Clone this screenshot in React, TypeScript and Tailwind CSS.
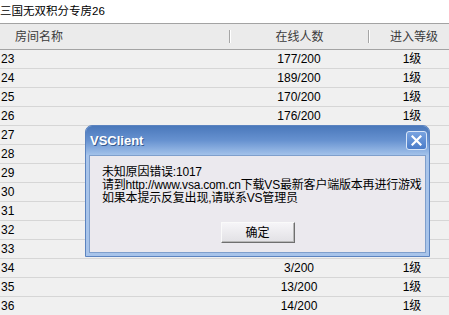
import React from 'react'

// rows 27-33 are covered by the dialog, only the room number shows
const rows = [
  ['23', '177/200', '1级'],
  ['24', '189/200', '1级'],
  ['25', '170/200', '1级'],
  ['26', '176/200', '1级'],
  ['27', '', ''],
  ['28', '', ''],
  ['29', '', ''],
  ['30', '', ''],
  ['31', '', ''],
  ['32', '', ''],
  ['33', '', ''],
  ['34', '3/200', '1级'],
  ['35', '13/200', '1级'],
  ['36', '14/200', '1级'],
]

function HeaderSep() {
  return <div className="h-[13px] w-[2px] border-l border-[#a6a6a6] border-r border-r-white" />
}

function ErrorDialog() {
  return (
    <div className="absolute left-[85px] top-[125px] flex h-[132px] w-[345px] flex-col overflow-hidden rounded-t-[7px] border border-[#5b83bf] bg-[#a8c4ea]">
      <div className="flex h-[29px] shrink-0 items-center justify-between bg-linear-to-b from-[#4a78bb] via-[#6792d0] to-[#a3c2ea] pl-[4px] pr-[2px]">
        <span className="text-[13px] font-bold text-white [text-shadow:1px_1px_0_#34598f]">VSClient</span>
        <div className="flex h-[19px] w-[21px] items-center justify-center rounded-[3px] border border-[#d9e6f8] bg-linear-to-b from-[#79a3e0] to-[#4a7cc9]">
          <svg width="11" height="11" viewBox="0 0 11 11">
            <path d="M1.5 1.5 L9.5 9.5 M9.5 1.5 L1.5 9.5" stroke="white" strokeWidth="2.2" strokeLinecap="square" />
          </svg>
        </div>
      </div>
      <div className="mx-[3px] mb-[3px] flex flex-1 flex-col border border-[#7f9fcc] bg-[#ebe9ee] pl-[12px] pt-[10px]">
        <div className="text-[12px] leading-[13px] tracking-[-0.2px] text-black">
          <div>未知原因错误:1017</div>
          <div className="whitespace-nowrap">请到http://www.vsa.com.cn下载VS最新客户端版本再进行游戏</div>
          <div>如果本提示反复出现,请联系VS管理员</div>
        </div>
        <div className="mt-[17px] flex justify-center pr-[12px]">
          <div className="flex h-[21px] w-[74px] items-center justify-center border border-[#fafafa] border-b-[#6f6f6f] border-r-[#6f6f6f] bg-linear-to-b from-[#f6f5f8] to-[#e2e1e5] text-[12px] text-black shadow-[inset_-1px_-1px_0_#b8b8b8]">
            确定
          </div>
        </div>
      </div>
    </div>
  )
}

export default function App() {
  return (
    <div className="relative h-[315px] w-[449px] overflow-hidden bg-white font-['Liberation_Sans','Noto_Sans_CJK_SC',sans-serif] text-black">
      <div className="h-[23px] whitespace-nowrap text-[11.5px] leading-[22px]">三国无双积分专房26</div>

      <div className="grid h-[27px] w-[458px] grid-cols-[229px_2px_137px_2px_88px] items-center border-t border-b border-[#a3a3a3] bg-[#ebebeb] text-[12px] text-[#3c3c3c]">
        <div className="pl-[15px]">房间名称</div>
        <HeaderSep />
        <div className="text-center">在线人数</div>
        <HeaderSep />
        <div className="text-center">进入等级</div>
      </div>

      <div>
        {rows.map(([id, online, level]) => (
          <div
            key={id}
            className="grid h-[19px] w-[456px] grid-cols-[230px_138px_88px] items-center border-b border-[#d6d6d6] bg-[#f0f0f0] text-[12px] leading-[18px]"
          >
            <div className="pl-[1px]">{id}</div>
            <div className="text-center">{online}</div>
            <div className="text-center">{level}</div>
          </div>
        ))}
      </div>

      <ErrorDialog />
    </div>
  )
}
